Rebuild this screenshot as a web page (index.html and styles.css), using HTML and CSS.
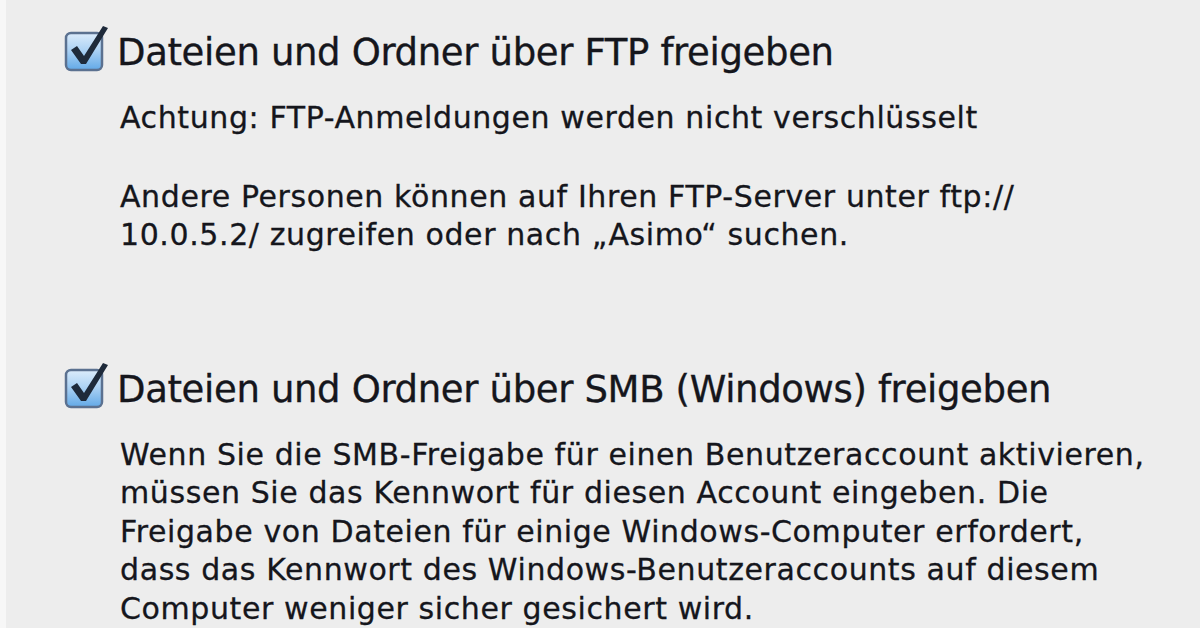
FILE: index.html
```html
<!DOCTYPE html>
<html lang="de">
<head>
    <meta charset="UTF-8">
    <title>Freigaben</title>
    <link rel="stylesheet" href="styles.css">
</head>
<body>
    <div class="edge"></div>
    <div class="panel">
        <section class="option">
            <div class="option-head">
                <svg class="check" viewBox="0 0 48 48" width="48" height="48">
                    <defs>
                        <linearGradient id="boxFill" x1="0" y1="0" x2="0" y2="1">
                            <stop offset="0" stop-color="#dcecfb"/>
                            <stop offset="0.45" stop-color="#aed3f4"/>
                            <stop offset="1" stop-color="#62a9e7"/>
                        </linearGradient>
                    </defs>
                    <rect x="3" y="8" width="36" height="37" rx="5" fill="url(#boxFill)" stroke="#5b7190" stroke-width="2.5"/>
                    <path d="M8 25 L14 21 L21 31 L40 1 L45 3 L23 39 L18 39 Z" fill="#1e2a3a"/>
                </svg>
                <h3>Dateien und Ordner über FTP freigeben</h3>
            </div>
            <div class="option-body">
                <p>Achtung: FTP-Anmeldungen werden nicht verschlüsselt</p>
                <p>Andere Personen können auf Ihren FTP-Server unter ftp://<br>10.0.5.2/ zugreifen oder nach „Asimo“ suchen.</p>
            </div>
        </section>

        <section class="option">
            <div class="option-head">
                <svg class="check" viewBox="0 0 48 48" width="48" height="48">
                    <rect x="3" y="8" width="36" height="37" rx="5" fill="url(#boxFill)" stroke="#5b7190" stroke-width="2.5"/>
                    <path d="M8 25 L14 21 L21 31 L40 1 L45 3 L23 39 L18 39 Z" fill="#1e2a3a"/>
                </svg>
                <h3>Dateien und Ordner über SMB (Windows) freigeben</h3>
            </div>
            <div class="option-body">
                <p>Wenn Sie die SMB-Freigabe für einen Benutzeraccount aktivieren,<br>müssen Sie das Kennwort für diesen Account eingeben. Die<br>Freigabe von Dateien für einige Windows-Computer erfordert,<br>dass das Kennwort des Windows-Benutzeraccounts auf diesem<br>Computer weniger sicher gesichert wird.</p>
            </div>
        </section>
    </div>
</body>
</html>
```

FILE: styles.css
```css
/* General Styles */
* {
    margin: 0;
    padding: 0;
    box-sizing: border-box;
}

body {
    background-color: #ededed;
    font-family: "DejaVu Sans", Verdana, sans-serif;
    color: #15161c;
    display: flex;
    height: 628px;
    overflow: hidden;
}

.edge {
    width: 6px;
    background-color: #f7f7f7;
}

.panel {
    padding: 25px 0 0 57px;
    display: flex;
    flex-direction: column;
    gap: 107px;
}

/* Checkbox rows */
.option-head {
    display: flex;
    align-items: flex-start;
    gap: 6px;
}

.check {
    display: block;
    flex-shrink: 0;
}

.option-head h3 {
    font-size: 37px;
    line-height: 44px;
    font-weight: normal;
    letter-spacing: -0.35px;
    margin-top: 6px;
    white-space: nowrap;
    -webkit-text-stroke: 0.35px #15161c;
}

.option-body {
    padding-left: 57px;
    margin-top: 24px;
}

.option-body p {
    font-size: 30px;
    line-height: 38.5px;
    letter-spacing: 0.6px;
    margin-bottom: 40px;
    white-space: nowrap;
    -webkit-text-stroke: 0.3px #15161c;
}

.option-body p:last-child {
    margin-bottom: 0;
}
```
